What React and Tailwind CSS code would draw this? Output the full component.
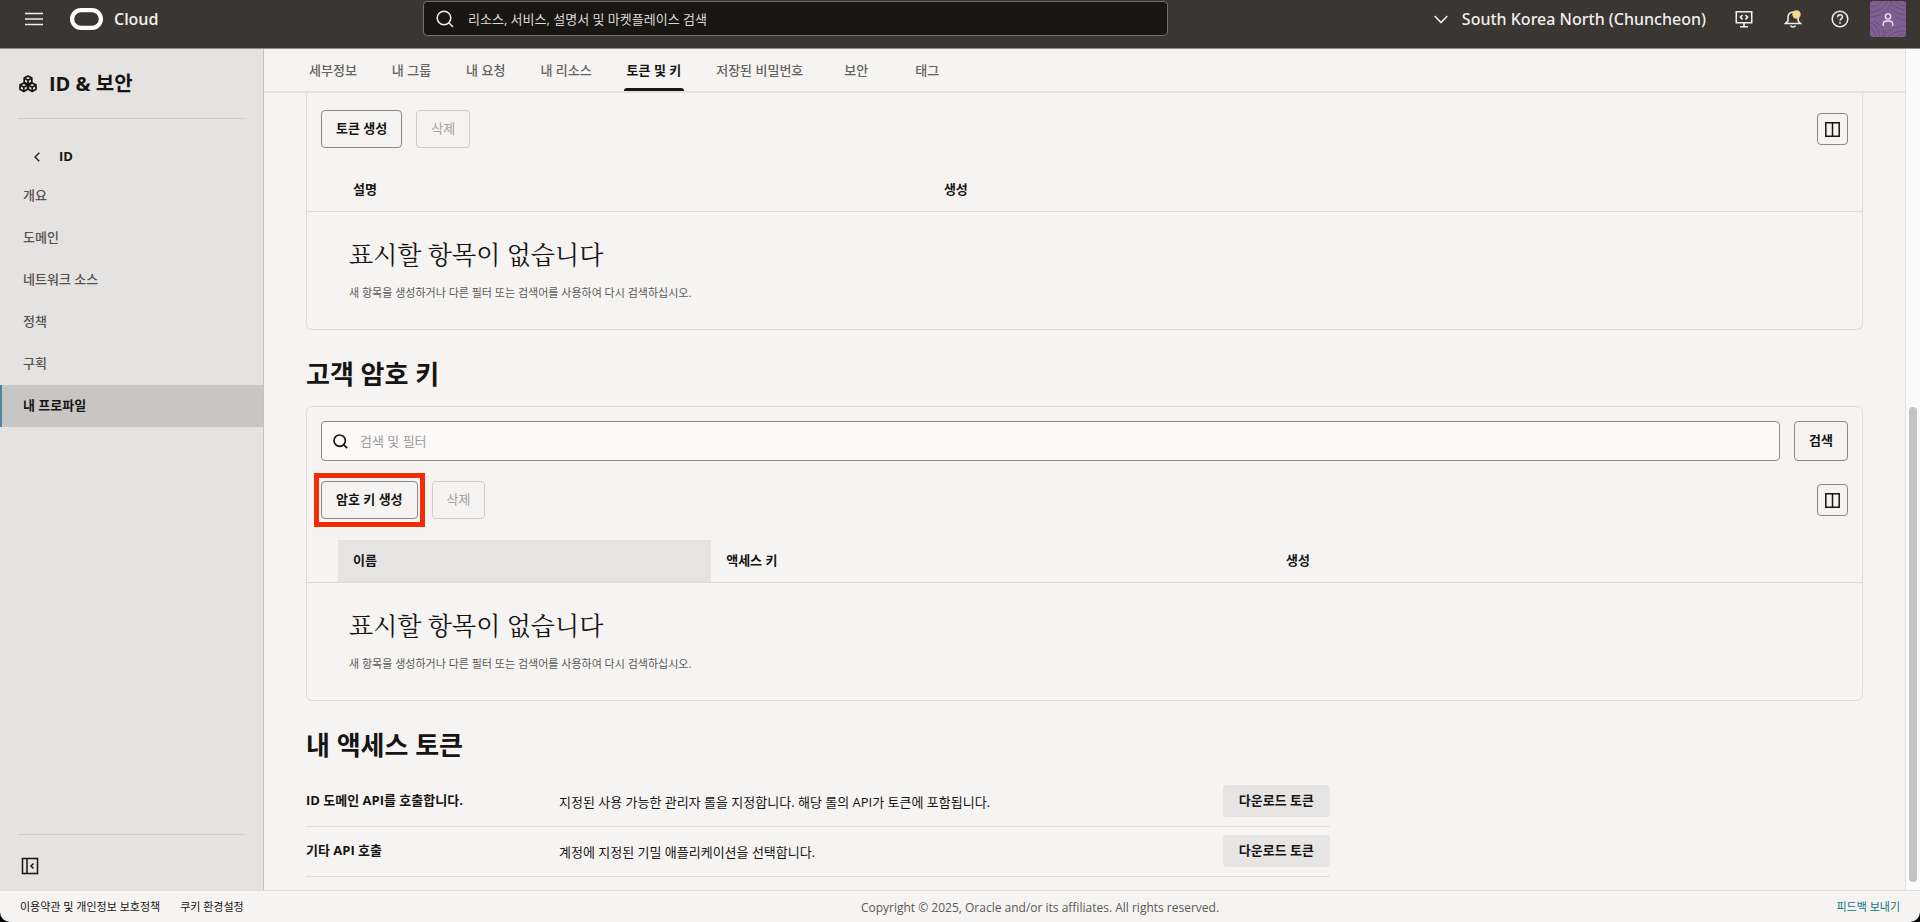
import React, { useState } from 'react';

const tabs = ['세부정보', '내 그룹', '내 요청', '내 리소스', '토큰 및 키', '저장된 비밀번호', '보안', '태그'];

const menu = ['개요', '도메인', '네트워크 소스', '정책', '구획', '내 프로파일'];

const tokens = [
    { name: 'ID 도메인 API를 호출합니다.', text: '지정된 사용 가능한 관리자 롤을 지정합니다. 해당 롤의 API가 토큰에 포함됩니다.' },
    { name: '기타 API 호출', text: '계정에 지정된 기밀 애플리케이션을 선택합니다.' },
];

function SearchIcon({ className }) {
    return (
        <svg viewBox="0 0 18 18" className={className} fill="none" stroke="currentColor" aria-hidden="true">
            <circle cx="8" cy="8" r="6.8" />
            <path d="M12.8 12.8 17 17" />
        </svg>
    );
}

function ClusterIcon() {
    // three hexagonal nodes stacked as a pyramid
    const cell = 'M0-4.2 3.8-2.1V2.1L0 4.2-3.8 2.1V-2.1ZM-3.8-2.1 0 0 3.8-2.1M0 0V4.2';
    return (
        <svg viewBox="0 0 18 18" className="size-[18px]" fill="none" stroke="currentColor" strokeWidth="1.7" strokeLinejoin="round" aria-hidden="true">
            <path d={cell} transform="translate(9 5.2)" />
            <path d={cell} transform="translate(4.8 12.2)" />
            <path d={cell} transform="translate(13.2 12.2)" />
        </svg>
    );
}

function ColumnsButton() {
    return (
        <button type="button" aria-label="열 관리" className="flex h-8 w-[31px] items-center justify-center rounded border border-[#8b8885]">
            <svg viewBox="0 0 15 15" className="size-[15px]" fill="none" stroke="currentColor" strokeWidth="1.5" aria-hidden="true">
                <path d="M.8.8h13.400v13.400H.8zM7.500.8v13.400" />
            </svg>
        </button>
    );
}

function Header() {
    return (
        <header className="flex h-[49px] shrink-0 items-start border-b border-[#8f8c89] bg-[#3a3632] text-[#f1efed]">
            <div className="flex h-[38px] w-[423px] items-center">
                <button type="button" aria-label="메뉴" className="ml-[25px]">
                    <svg viewBox="0 0 18 14" className="h-[14px] w-[18px]" stroke="currentColor" strokeWidth="1.6" aria-hidden="true">
                        <path d="M0 1.5h18M0 7h18M0 12.5h18" />
                    </svg>
                </button>
                <a href="#" className="ml-[27px] flex items-center gap-[11px] text-base font-semibold">
                    <svg viewBox="0 0 33 22" className="h-[22px] w-[33px]" fill="none" stroke="#fff" strokeWidth="4.2" aria-hidden="true">
                        <rect x="2.1" y="2.1" width="28.8" height="17.8" rx="8.9" />
                    </svg>
                    Cloud
                </a>
            </div>
            <label className="mt-px flex h-[35px] w-[745px] items-center gap-[14px] rounded border border-[#75726e] bg-[#191713] pl-3">
                <SearchIcon className="size-[18px] stroke-[1.5]" />
                <input
                    type="text"
                    aria-label="검색"
                    placeholder="리소스, 서비스, 설명서 및 마켓플레이스 검색"
                    className="h-full flex-1 bg-transparent text-[13px] outline-none placeholder:text-[#dcd9d6]"
                />
            </label>
            <div className="flex h-[38px] flex-1 items-center justify-end">
                <button type="button" className="flex items-center gap-[14px] font-['Noto_Sans',sans-serif] text-base font-medium whitespace-nowrap">
                    <svg viewBox="0 0 14 9" className="h-[9px] w-[14px]" fill="none" stroke="currentColor" strokeWidth="1.5" aria-hidden="true">
                        <path d="m.7 1 6.3 6.6L13.300 1" />
                    </svg>
                    South Korea North (Chuncheon)
                </button>
                <button type="button" aria-label="개발자 도구" className="ml-[29px]">
                    <svg viewBox="0 0 18 18" className="size-[18px]" fill="none" stroke="currentColor" strokeWidth="1.6" aria-hidden="true">
                        <path d="M1.300 1.800h15.400v11H1.300zM9 13v3.500M5 16.800h8M7.600 5 5.400 7.200l2.200 2.200M10.400 5l2.200 2.200-2.200 2.200" />
                    </svg>
                </button>
                <button type="button" aria-label="알림" className="ml-[31px]">
                    <svg viewBox="0 0 18 18" className="size-[18px]" fill="none" stroke="currentColor" strokeWidth="1.600" aria-hidden="true">
                        <path d="M1.500 13.500h15L14.200 11V7c0-2.800-2.200-5-5-5S4 4.200 4 7v4zM6.500 15.500c.5 1 1.400 1.500 2.500 1.500s2-.5 2.500-1.500" />
                        <circle cx="12.500" cy="4.500" r="4.200" fill="#f0d98e" stroke="none" />
                    </svg>
                </button>
                <button type="button" aria-label="도움말" className="ml-[29px]">
                    <svg viewBox="0 0 18 18" className="size-[18px]" fill="none" stroke="currentColor" strokeWidth="1.500" aria-hidden="true">
                        <circle cx="9" cy="9" r="7.800" />
                        <path d="M6.600 7.200c0-1.500 1-2.400 2.400-2.400s2.400.9 2.400 2.200c0 1.800-2.400 1.800-2.400 3.700M9 12v1.700" />
                    </svg>
                </button>
                <button type="button" aria-label="프로파일" className="mr-[14px] ml-[21px]">
                    <svg viewBox="0 0 36 36" className="size-9" fill="none" aria-hidden="true">
                        <rect width="36" height="36" rx="3" fill="#806093" />
                        <path
                            d="M0 6c6 0 9-2 12-6M0 11c9 0 14-4 17-11M0 16c12-1 19-7 22-16M20 0c3 5 8 8 16 9M25 0c2 3 6 4 11 5M36 14c-6 0-12-3-16-7M36 19c-5 0-9-2-12-5M0 21c5 2 9 8 10 15M0 26c3 2 5 6 6 10M4 20c6 3 10 9 11 16M12 36c4-6 14-11 24-11M18 36c4-4 10-6 18-6M25 36c3-2 7-3 11-3"
                            stroke="#6a4f7d"
                            strokeWidth="1"
                        />
                        <circle cx="18" cy="15.500" r="2.600" stroke="#f3e6fa" strokeWidth="1.300" />
                        <path d="M13.200 25v-1.500c0-2.200 1.600-3.500 3.800-3.500h2c2.200 0 3.800 1.300 3.800 3.500V25" stroke="#f3e6fa" strokeWidth="1.300" />
                    </svg>
                </button>
            </div>
        </header>
    );
}

function Sidebar() {
    return (
        <aside className="flex w-[264px] shrink-0 flex-col border-r border-[#c4c2c0] bg-[#e4e3e1]">
            <div className="mx-[18px] flex h-[70px] items-center gap-3 border-b border-[#d0cecc] pl-px">
                <ClusterIcon />
                <h1 className="text-xl font-bold">ID &amp; 보안</h1>
            </div>
            <button type="button" className="mt-7 ml-[34px] flex h-5 items-center gap-[19px] text-[13px] font-bold">
                <svg viewBox="0 0 6 10" className="h-[10px] w-[6px]" fill="none" stroke="currentColor" strokeWidth="1.300" aria-hidden="true">
                    <path d="M5.300.7 1 5l4.300 4.300" />
                </svg>
                ID
            </button>
            <nav className="mt-2 flex flex-col">
                {menu.map((item) => (
                    <a
                        key={item}
                        href="#"
                        className={
                            item === '내 프로파일'
                                ? 'flex h-[42px] items-center border-l-2 border-[#4f87a3] bg-[#c8c6c4] pl-[21px] text-[13px] font-bold text-[#161513]'
                                : 'flex h-[42px] items-center pl-[23px] text-[13px] font-medium text-[#55524f]'
                        }
                    >
                        {item}
                    </a>
                ))}
            </nav>
            <div className="mx-[18px] mt-auto h-14 border-t border-[#d0cecc] pt-[22px] pl-[3px]">
                <button type="button" aria-label="메뉴 접기" className="block">
                    <svg viewBox="0 0 18 18" className="size-[18px]" fill="none" stroke="currentColor" strokeWidth="1.500" aria-hidden="true">
                        <path d="M1.500 1.500h15v15h-15zM6 1.500v15M12.500 6.500 10 9l2.500 2.500" />
                    </svg>
                </button>
            </div>
        </aside>
    );
}

function ItemTable({ columns, widths, active }) {
    return (
        <table className="w-full table-fixed border-collapse text-left">
            <thead>
                <tr className="h-[42px] border-b border-[#dedcda] text-[13px]">
                    <td className="w-[31px]" />
                    {columns.map((col, i) => (
                        <th key={col} scope="col" className={`${widths[i]} px-[15px] font-bold ${col === active ? 'bg-[#e5e4e2]' : ''}`}>
                            {col}
                        </th>
                    ))}
                </tr>
            </thead>
            <tbody>
                <tr>
                    <td colSpan={columns.length + 1} className="h-[118px] pl-[42px] align-top">
                        <p className="mt-[23px] font-['Noto_Serif_CJK_KR','Noto_Sans_CJK_KR',serif] text-[25px] leading-9">
                            표시할 항목이 없습니다
                        </p>
                        <p className="mt-3 text-[11px] leading-5 text-[#5b5855]">
                            새 항목을 생성하거나 다른 필터 또는 검색어를 사용하여 다시 검색하십시오.
                        </p>
                    </td>
                </tr>
            </tbody>
        </table>
    );
}

function App() {
    const [activeTab, setActiveTab] = useState('토큰 및 키');

    return (
        <div className="min-h-screen bg-black">
            <div className="flex min-h-screen flex-col overflow-hidden rounded-b-[10px] bg-[#f5f4f2] font-['Open_Sans','Noto_Sans_CJK_KR',sans-serif] text-[#161513]">
                <Header />
                <div className="flex flex-1">
                    <Sidebar />
                    <main className="min-w-0 flex-1">
                        <nav className="flex h-[44px] gap-px border-b-2 border-[#e3e2e0] pl-[28px]">
                            {tabs.map((tab) => (
                                <button
                                    key={tab}
                                    type="button"
                                    onClick={() => setActiveTab(tab)}
                                    className={`relative min-w-[70px] px-[17px] pt-0.5 text-[13px] whitespace-nowrap ${tab === activeTab ? 'font-bold' : 'font-medium text-[#65625f]'}`}
                                >
                                    {tab}
                                    {tab === activeTab && <span className="absolute inset-x-[14px] bottom-0 h-[3px] rounded-t bg-[#161513]" />}
                                </button>
                            ))}
                        </nav>

                        <div className="px-[42px]">
                            <section className="rounded-b-md border border-t-0 border-[#dfdddb]">
                                <div className="flex items-center gap-[14px] px-[14px] pt-[17px] pb-[21px]">
                                    <button type="button" className="h-[38px] rounded border border-[#8b8885] px-[14px] text-[13px] font-bold">
                                        토큰 생성
                                    </button>
                                    <button type="button" disabled className="h-[38px] rounded border border-[#cfcdcb] px-[14px] text-[13px] text-[#a3a19f]">
                                        삭제
                                    </button>
                                    <div className="ml-auto">
                                        <ColumnsButton />
                                    </div>
                                </div>
                                <ItemTable columns={['설명', '생성']} widths={['w-[38%]', '']} />
                            </section>

                            <h2 className="mt-[26px] mb-[14px] text-[26px] leading-9 font-bold">고객 암호 키</h2>

                            <section className="rounded-md border border-[#dfdddb]">
                                <div className="flex gap-[14px] px-[14px] pt-[14px]">
                                    <label className="flex h-10 flex-1 items-center gap-3 rounded border border-[#8b8885] bg-[#fbfaf9] pl-[11px]">
                                        <SearchIcon className="size-[15px] stroke-2" />
                                        <input
                                            type="text"
                                            aria-label="검색 및 필터"
                                            placeholder="검색 및 필터"
                                            className="h-full flex-1 bg-transparent text-[13px] outline-none placeholder:text-[#9d9b99]"
                                        />
                                    </label>
                                    <button type="button" className="h-10 rounded border border-[#8b8885] px-[14px] text-[13px] font-bold">
                                        검색
                                    </button>
                                </div>
                                <div className="flex items-center gap-[14px] px-[14px] pt-5 pb-[21px]">
                                    <div className="relative">
                                        <button type="button" className="h-[38px] rounded border border-[#8b8885] px-[14px] text-[13px] font-bold">
                                            암호 키 생성
                                        </button>
                                        <span className="pointer-events-none absolute -inset-x-[7px] -inset-y-2 border-5 border-[#f12c07]" />
                                    </div>
                                    <button type="button" disabled className="h-[38px] rounded border border-[#cfcdcb] px-[14px] text-[13px] text-[#a3a19f]">
                                        삭제
                                    </button>
                                    <div className="ml-auto">
                                        <ColumnsButton />
                                    </div>
                                </div>
                                <ItemTable columns={['이름', '액세스 키', '생성']} widths={['w-[24%]', 'w-[36%]', '']} active="이름" />
                            </section>

                            <h2 className="mt-[26px] mb-[14px] text-[26px] leading-9 font-bold">내 액세스 토큰</h2>

                            <ul className="mb-3 w-2/3 max-w-[1024px] text-[13px]">
                                {tokens.map((token) => (
                                    <li key={token.name} className="flex h-[50px] items-center border-b border-[#dedcda] pb-0.5">
                                        <span className="w-[253px] font-bold">{token.name}</span>
                                        <span className="flex-1 pt-1">{token.text}</span>
                                        <button type="button" className="h-8 rounded bg-[#e6e5e3] px-4 font-bold">
                                            다운로드 토큰
                                        </button>
                                    </li>
                                ))}
                            </ul>
                        </div>
                    </main>
                    {/* scroll track */}
                    <div className="flex w-[15px] flex-col justify-end border-l border-[#e3e2e0] bg-[#fbfafa] pb-2 pl-[3px]">
                        <div className="h-[57%] w-2 rounded-full bg-[#c4c3c2]" />
                    </div>
                </div>
                <footer className="flex h-8 shrink-0 items-center border-t border-[#e0dedc] px-5 pt-0.5 text-[11px]">
                    <div className="flex flex-1 gap-5">
                        <a href="#">이용약관 및 개인정보 보호정책</a>
                        <a href="#">쿠키 환경설정</a>
                    </div>
                    <p className="ml-40 text-xs text-[#5b5855]">Copyright © 2025, Oracle and/or its affiliates. All rights reserved.</p>
                    <div className="flex-1 text-right">
                        <a href="#" className="text-[#0d7480]">피드백 보내기</a>
                    </div>
                </footer>
            </div>
        </div>
    );
}

export default App;
